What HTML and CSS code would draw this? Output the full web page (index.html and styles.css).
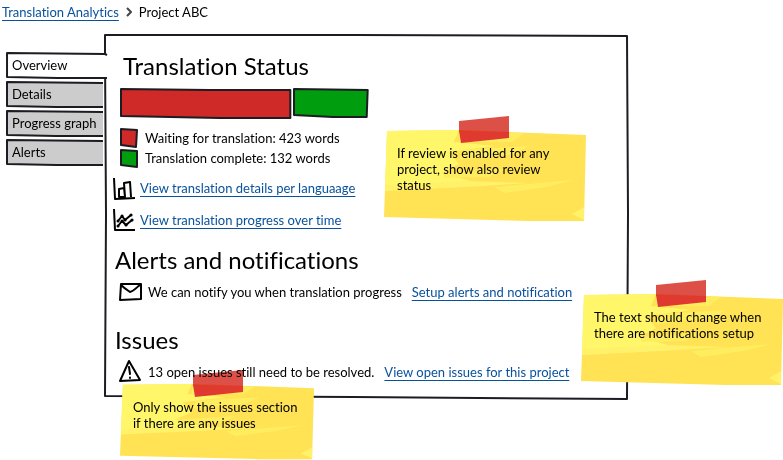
FILE: index.html
```html
<!DOCTYPE html>
<html lang="en">
<head>
<meta charset="utf-8">
<title>Project ABC - Translation Analytics</title>
<link rel="stylesheet" href="styles.css">
</head>
<body>
<nav class="crumbs" aria-label="Breadcrumb">
  <a href="#">Translation Analytics</a>
  <svg class="chevron" viewBox="0 0 8 10" aria-hidden="true"><path d="M2 1 L6 5 L2 9"/></svg>
  <span>Project ABC</span>
</nav>

<main class="stage">
  <nav class="tabs" aria-label="Sections">
    <button class="tab tab-active" type="button">
      <svg class="sketch" viewBox="0 0 98 28" preserveAspectRatio="none" aria-hidden="true"><path class="paper" d="M1 1 L98 2 V26 L1 25Z"/><path d="M98 3 L96 2 L1 1 L1 25 L50 26 L98 26"/></svg>
      <span>Overview</span>
    </button>
    <button class="tab" type="button">
      <svg class="sketch" viewBox="0 0 98 28" preserveAspectRatio="none" aria-hidden="true"><path class="grey" d="M1 1 L97 2 V27 L1 25Z"/><path d="M97 2 L1 1 L1 25 L50 26 L97 26"/></svg>
      <span>Details</span>
    </button>
    <button class="tab" type="button">
      <svg class="sketch" viewBox="0 0 98 28" preserveAspectRatio="none" aria-hidden="true"><path class="grey" d="M1 1 L97 2 V27 L1 25Z"/><path d="M97 2 L1 1 L1 25 L50 26 L97 26"/></svg>
      <span>Progress graph</span>
    </button>
    <button class="tab" type="button">
      <svg class="sketch" viewBox="0 0 98 28" preserveAspectRatio="none" aria-hidden="true"><path class="grey" d="M1 1 L97 2 V27 L1 25Z"/><path d="M97 2 L1 1 L1 25 L50 26 L97 26"/></svg>
      <span>Alerts</span>
    </button>
  </nav>

  <div class="panel">
    <svg class="sketch" viewBox="0 0 524 364" preserveAspectRatio="none" aria-hidden="true"><path d="M1 20 L1 1 L250 1 L523 2 L524 180 L523 364 L250 362 L1 361 L2 180 L1 20"/></svg>

    <section class="status">
      <h1>Translation Status</h1>
      <div class="meter">
        <div class="bar" style="flex-grow:172">
          <svg class="sketch" viewBox="0 0 172 32" preserveAspectRatio="none" aria-hidden="true"><path class="red" d="M1 2 L90 3 L171 3 L171 31 L100 31 L1 29 Z"/></svg>
        </div>
        <div class="bar" style="flex-grow:76">
          <svg class="sketch" viewBox="0 0 76 32" preserveAspectRatio="none" aria-hidden="true"><path class="green" d="M1 2 L75 3 L74 30 L40 30 L1 28 Z"/></svg>
        </div>
      </div>
      <ul class="legend">
        <li><svg class="swatch" viewBox="0 0 18 19" aria-hidden="true"><path class="red" d="M1 0 L17 1 L16 18 L1 16Z"/></svg>Waiting for translation: 423 words</li>
        <li><svg class="swatch" viewBox="0 0 18 19" aria-hidden="true"><path class="green" d="M1 1 L17 2 L17 18 L1 16Z"/></svg>Translation complete: 132 words</li>
      </ul>
      <ul class="reports">
        <li>
          <svg class="chart" viewBox="0 0 23 24" aria-hidden="true"><path d="M1 2 L2 23 L22 22"/><path d="M6 21 L6 13 L11 12 L12 21 Z M12 21 L11 7 L17 6 L18 21"/></svg>
          <a href="#">View translation details per languaage</a>
        </li>
        <li>
          <svg class="chart" viewBox="0 0 23 24" aria-hidden="true"><path d="M1 1 L2 22 L22 22"/><path d="M5 13 L9 8 L12 12 L18 7 M5 18 L9 13 L13 17 L19 12"/><path class="dots" d="M5 13h.1M9 8h.1M12 12h.1M18 7h.1M5 18h.1M9 13h.1M13 17h.1M19 12h.1"/></svg>
          <a href="#">View translation progress over time</a>
        </li>
      </ul>
    </section>

    <section class="alerts">
      <h2>Alerts and notifications</h2>
      <p class="line">
        <svg class="icon" viewBox="0 0 24 24" aria-hidden="true"><path d="M2 4 L22 4 L22 19 L1 20 Z M2 5 C5 8 8 10 11 12 C15 11 18 7 22 4"/></svg>
        <span>We can notify you when translation progress</span>
        <a href="#">Setup alerts and notification</a>
      </p>
    </section>

    <section class="issues">
      <h2>Issues</h2>
      <p class="line">
        <svg class="icon thin" viewBox="0 0 24 24" aria-hidden="true"><path d="M10 1 L21 20 L1 21 Z"/><path class="mark" d="M10 7 L11 14 M11 17.500 L11 18"/></svg>
        <span>13 open issues still need to be resolved.</span>
        <a href="#">View open issues for this project</a>
      </p>
    </section>
  </div>

  <aside class="note note-review">
    <svg class="sheet" viewBox="0 0 202 92" preserveAspectRatio="none" aria-hidden="true">
      <path class="base" d="M3 1 L75 0 L202 5 L200 91 L145 91 L0 87 Z"/>
      <path class="light" d="M3 1 L75 0 L70 12 L110 16 L65 22 L75 34 L58 43 L90 52 L1 61 Z"/>
      <path class="mid" d="M75 2 L140 3 L128 12 L75 12Z M80 20 L145 16 L130 24 L75 30Z M60 43 L120 39 L105 47 L60 48Z M110 57 L190 50 L162 57 L120 63Z"/>
      <path class="glow" d="M1 55 L80 51 L145 53 L80 57 L1 61Z M188 84 L200 77 L200 90 L194 87Z"/>
    </svg>
    <svg class="tape" viewBox="0 0 50 28" aria-hidden="true"><path class="tape-top" d="M0 5 L50 0 L50 16 L0 16 Z"/><path class="tape-low" d="M0 15 L50 16 L50 22 L2 27 Z"/></svg>
    <p>If review is enabled for any project, show also review status</p>
  </aside>

  <aside class="note note-alerts">
    <svg class="sheet" viewBox="0 0 202 92" preserveAspectRatio="none" aria-hidden="true">
      <path class="base" d="M3 1 L75 0 L202 5 L200 91 L145 91 L0 87 Z"/>
      <path class="light" d="M3 1 L75 0 L70 12 L110 16 L65 22 L75 34 L58 43 L90 52 L1 61 Z"/>
      <path class="mid" d="M75 2 L140 3 L128 12 L75 12Z M80 20 L145 16 L130 24 L75 30Z M60 43 L120 39 L105 47 L60 48Z M110 57 L190 50 L162 57 L120 63Z"/>
      <path class="glow" d="M1 55 L80 51 L145 53 L80 57 L1 61Z M188 84 L200 77 L200 90 L194 87Z"/>
    </svg>
    <svg class="tape" viewBox="0 0 50 28" aria-hidden="true"><path class="tape-top" d="M0 5 L50 0 L50 16 L0 16 Z"/><path class="tape-low" d="M0 15 L50 16 L50 22 L2 27 Z"/></svg>
    <p>The text should change when there are notifications setup</p>
  </aside>

  <aside class="note note-issues">
    <svg class="sheet" viewBox="0 0 202 92" preserveAspectRatio="none" aria-hidden="true">
      <path class="base" d="M3 1 L75 0 L202 5 L200 91 L145 91 L0 87 Z"/>
      <path class="light" d="M3 1 L75 0 L70 12 L110 16 L65 22 L75 34 L58 43 L90 52 L1 61 Z"/>
      <path class="mid" d="M75 2 L140 3 L128 12 L75 12Z M80 20 L145 16 L130 24 L75 30Z M60 43 L120 39 L105 47 L60 48Z M110 57 L190 50 L162 57 L120 63Z"/>
      <path class="glow" d="M1 55 L80 51 L145 53 L80 57 L1 61Z M188 84 L200 77 L200 90 L194 87Z"/>
    </svg>
    <svg class="tape" viewBox="0 0 50 28" aria-hidden="true"><path class="tape-top" d="M0 5 L50 0 L50 16 L0 16 Z"/><path class="tape-low" d="M0 15 L50 16 L50 22 L2 27 Z"/></svg>
    <p>Only show the issues section if there are any issues</p>
  </aside>
</main>
</body>
</html>
```
FILE: styles.css
```css
* { box-sizing: border-box; }

body {
  margin: 0;
  min-height: 100vh;
  background: #fff;
  color: #000;
  font: 13px/16px Lato, "Open Sans", sans-serif;
  font-variant-ligatures: none;
}

h1, h2, p, ul { margin: 0; padding: 0; }
ul { list-style: none; }

h1, h2 {
  font-size: 24px;
  line-height: 32px;
  font-weight: 400;
}

a {
  color: #08519c;
  text-decoration: underline;
  text-underline-offset: 3px;
}

svg {
  display: block;
  flex: none;
  overflow: visible;
  fill: none;
  stroke: #1c1c22;
  stroke-width: 2;
  stroke-linejoin: round;
}

.sketch {
  position: absolute;
  inset: 0;
  width: 100%;
  height: 100%;
}

.sketch path { vector-effect: non-scaling-stroke; }

.red { fill: #cf2a28; }
.green { fill: #009e0f; }
.grey { fill: #ccc; stroke: none; }
.paper { fill: #fff; stroke: none; }

.crumbs {
  display: flex;
  align-items: center;
  gap: 6px;
  padding: 4px 2px 14px;
}

.chevron { width: 8px; height: 10px; stroke: #444; }

.stage {
  position: relative;
  display: flex;
  align-items: flex-start;
  padding: 0 155px 61px 6px;
}

.tabs {
  display: flex;
  flex-direction: column;
  gap: 1px;
  width: 98px;
  padding-top: 18px;
}

.tab {
  position: relative;
  height: 28px;
  padding: 0 0 3px 6px;
  border: 0;
  background: none;
  color: inherit;
  font: inherit;
  text-align: left;
  white-space: nowrap;
}

.tab span { position: relative; }
.tab-active { z-index: 1; margin-right: -3px; }

.panel {
  position: relative;
  flex: 1;
  padding: 16px 16px 11px 11px;
}

.panel section { position: relative; }

.status h1 { padding-left: 8px; }

.meter {
  display: flex;
  gap: 2px;
  max-width: 254px;
  margin: 5px 0 9px;
  padding-left: 5px;
}

.bar { position: relative; flex-basis: 0; height: 32px; }

.legend { padding-left: 5px; }
.legend li { display: flex; align-items: center; gap: 7px; height: 20px; }
.swatch { width: 18px; height: 19px; }

.reports { padding: 4px 0 8px; }
.reports li { display: flex; align-items: center; gap: 4px; height: 32px; }
.chart { width: 23px; height: 24px; margin-left: -2px; }
.chart, .icon { stroke: #000; }
.dots { stroke-width: 3; stroke-linecap: round; }

.line { display: flex; align-items: center; height: 32px; padding-left: 4px; }
.icon { width: 24px; height: 24px; margin-right: 5px; }
.mark { stroke-width: 2; stroke-linecap: round; }
.line a { margin-left: 10px; }

.alerts { padding-bottom: 16px; }

.note {
  position: absolute;
  width: 202px;
  height: 92px;
  padding: 15px 12px 0 13px;
}

.note p { position: relative; }

.sheet {
  position: absolute;
  inset: 0;
  width: 100%;
  height: 100%;
  stroke: none;
}

.base { fill: #ffe354; }
.light { fill: #fff769; }
.mid { fill: #ffed60; }
.glow { fill: #fff26a; }

.tape {
  position: absolute;
  top: -14px;
  left: 75px;
  width: 50px;
  height: 28px;
  stroke: none;
  mix-blend-mode: multiply;
}

.tape-top { fill: #dc5048; }
.tape-low { fill: #e03e80; }

.note-review { left: 384px; top: 96px; }
.note-alerts { left: 581px; top: 260px; }
.note-issues { left: 120px; top: 350px; width: 194px; height: 76px; }
.note-issues .tape { left: 73px; }
```
